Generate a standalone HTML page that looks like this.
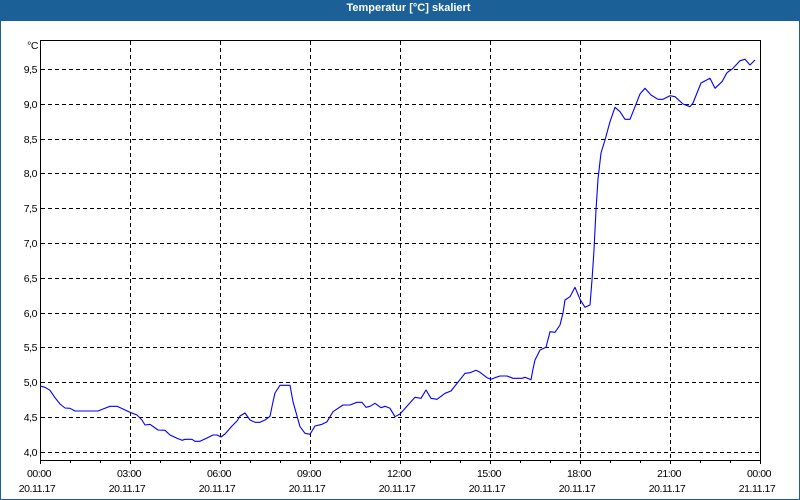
<!DOCTYPE html>
<html>
<head>
<meta charset="utf-8">
<style>
html,body{margin:0;padding:0;background:#fff;}
body{width:800px;height:500px;overflow:hidden;position:relative;font-family:"Liberation Sans",sans-serif;}
svg{position:absolute;left:0;top:0;}
text{font-family:"Liberation Sans",sans-serif;font-size:10.5px;fill:#000;letter-spacing:-0.45px;}
.t{font-weight:bold;fill:#fff;font-size:11px;letter-spacing:0;}
</style>
</head>
<body>
<svg width="800" height="500" viewBox="0 0 800 500">
<rect x="0" y="0" width="800" height="500" fill="#fff"/>
<g fill="#1b6197">
<rect x="0" y="0" width="800" height="21"/>
<rect x="0" y="0" width="1" height="500"/>
<rect x="799" y="0" width="1" height="500"/>
<rect x="0" y="499" width="800" height="1"/>
</g>
<text class="t" x="408.5" y="11" text-anchor="middle">Temperatur [°C] skaliert</text>

<g stroke="#000" stroke-width="1" stroke-dasharray="4 3" shape-rendering="crispEdges" fill="none">
<path d="M41 69.5H760M41 104.5H760M41 139.5H760M41 173.5H760M41 208.5H760M41 243.5H760M41 278.5H760M41 313.5H760M41 347.5H760M41 382.5H760M41 417.5H760M41 452.5H760"/>
<path d="M130.5 41V460M220.5 41V460M310.5 41V460M400.5 41V460M490.5 41V460M580.5 41V460M670.5 41V460"/>
</g>
<g stroke="#000" stroke-width="1" shape-rendering="crispEdges" fill="none">
<rect x="40.5" y="40.5" width="720" height="420"/>
<path d="M40.5 460V464M70.5 460V463M100.5 460V463M130.5 460V464M160.5 460V463M190.5 460V463M220.5 460V464M250.5 460V463M280.5 460V463M310.5 460V464M340.5 460V463M370.5 460V463M400.5 460V464M430.5 460V463M460.5 460V463M490.5 460V464M520.5 460V463M550.5 460V463M580.5 460V464M610.5 460V463M640.5 460V463M670.5 460V464M700.5 460V463M730.5 460V463M760.5 460V464"/>
</g>

<polyline fill="none" stroke="#0000ff" stroke-width="1.1" stroke-linejoin="round" points="40,386 45,387.3 50,390.3 55,397.7 60,404 65,408 70,408.3 75,411 98,411 103,409 110,406.3 117,406.3 123,409 130,412.3 137,415 142,420 145,425 150,424.3 158,430 165,430.3 170,435 177,438.3 182,440.3 185,439.3 192,439.3 195,441.3 200,441.3 207,438 213,435 217,435 221,437 225,434 232,426 237,421 240,416 245,413 250,420 255,422.3 260,422.3 265,420 270,416.3 273,401.7 275,393 280,385.3 290,385.3 293,401.7 297,416 300,426.7 305,433.3 310,434.3 315,426 322,424.3 327,421.7 333,411.7 343,405 350,405 357,402.3 362,402.3 366,407.3 370,406.3 375,403.3 381,407.7 385,406.3 390,408.3 395,416.7 400,414 415,397.3 421,398.3 426,390 431,398.3 437,399.3 445,393.3 451,391 465,373.3 470,372.7 476,370.3 480,372.3 487,377.7 491,379.3 495,377.7 500,376 507,376 513,378.3 522,378.3 525,377.3 531,379.7 533,369 535,360 540,350 546,347.3 550,331.7 555,332.3 560,325 563,313 565,300 570,296.7 575,287.3 580,299.3 585,307.3 590,305 592,280 594,250 596,210 598,179 601,153 605,140 610,121.7 615,107.3 620,111.7 625,119.3 630,119.3 635,106.7 640,94 645,88.3 651,95 658,99.3 663,99.3 670,95.7 675,96.7 683,104 690,106.7 693,103 701,83 710,78.3 715,88.3 722,81.7 727,72.7 733,68.3 740,60.7 745,59.3 750,65 755,60"/>

<g text-anchor="end">
<text x="38" y="49">°C</text>
<text x="37" y="73">9,5</text>
<text x="37" y="108">9,0</text>
<text x="37" y="143">8,5</text>
<text x="37" y="177">8,0</text>
<text x="37" y="212">7,5</text>
<text x="37" y="247">7,0</text>
<text x="37" y="282">6,5</text>
<text x="37" y="317">6,0</text>
<text x="37" y="351">5,5</text>
<text x="37" y="386">5,0</text>
<text x="37" y="421">4,5</text>
<text x="37" y="456">4,0</text>
</g>
<g text-anchor="middle">
<text x="39" y="477">00:00</text><text x="37" y="492">20.11.17</text>
<text x="129" y="477">03:00</text><text x="127" y="492">20.11.17</text>
<text x="219" y="477">06:00</text><text x="217" y="492">20.11.17</text>
<text x="309" y="477">09:00</text><text x="307" y="492">20.11.17</text>
<text x="399" y="477">12:00</text><text x="397" y="492">20.11.17</text>
<text x="489" y="477">15:00</text><text x="487" y="492">20.11.17</text>
<text x="579" y="477">18:00</text><text x="577" y="492">20.11.17</text>
<text x="669" y="477">21:00</text><text x="667" y="492">20.11.17</text>
<text x="759" y="477">00:00</text><text x="757" y="492">21.11.17</text>
</g>
</svg>
</body>
</html>
